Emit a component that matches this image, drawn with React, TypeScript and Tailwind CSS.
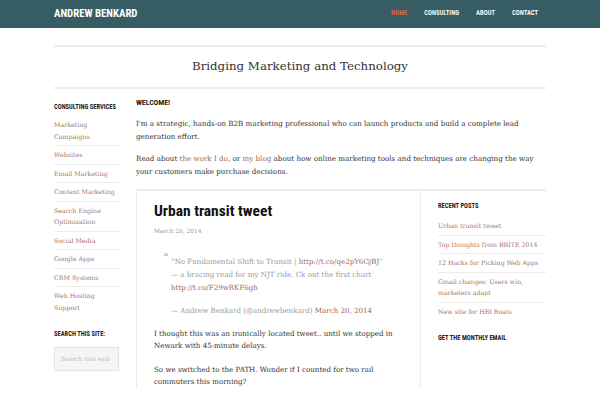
import React from "react";

const cond = "font-['Roboto_Condensed',Roboto,sans-serif] [font-stretch:75%]";
const serif = "font-['DejaVu_Serif','Liberation_Serif',serif]";

const services = [
  "Marketing Campaigns",
  "Websites",
  "Email Marketing",
  "Content Marketing",
  "Search Engine Optimization",
  "Social Media",
  "Google Apps",
  "CRM Systems",
  "Web Hosting Support",
];

const recent = [
  "Urban transit tweet",
  "Top thoughts from BRITE 2014",
  "12 Hacks for Picking Web Apps",
  "Gmail changes: Users win, marketers adapt",
  "New site for HBI Boats",
];

function WidgetTitle({ children, className = "" }: { children: React.ReactNode; className?: string }) {
  return (
    <h4 className={`${cond} whitespace-nowrap text-[6.5px] font-bold uppercase leading-[10px] text-[#222] ${className}`}>
      {children}
    </h4>
  );
}

function LinkList({ items }: { items: string[] }) {
  return (
    <ul>
      {items.map((item, i) => (
        <li
          key={item}
          className={`py-[3px] text-[6.3px] leading-[11.5px] text-[#a5766d] ${i < items.length - 1 ? "border-b border-[#ececec]" : ""}`}
        >
          {item}
        </li>
      ))}
    </ul>
  );
}

export default function App() {
  return (
    <div className={`min-h-[400px] bg-white ${serif} text-[#333]`}>
      <header className="h-[28px] bg-[#355d63]">
        <div className="mx-auto flex h-full w-[492px] items-center justify-between">
          <span className={`${cond} text-[10.8px] font-bold uppercase text-white`}>Andrew Benkard</span>
          <nav className={`${cond} flex pr-[8px] text-[6.6px] font-bold uppercase text-[#eef3f4]`}>
            <a className="text-[#dd6444]">Home</a>
            <a className="ml-[17px]">Consulting</a>
            <a className="ml-[17px]">About</a>
            <a className="ml-[17px]">Contact</a>
          </nav>
        </div>
      </header>

      <div className="mx-auto w-[492px]">
        <div className="mt-[17px] flex h-[44px] items-center justify-center border-y-2 border-[#ededed]">
          <h2 className="text-[11.8px] text-[#333]">Bridging Marketing and Technology</h2>
        </div>

        <div className="mt-[8px] flex">
          <aside className="w-[66px] pt-[4.7px]">
            <WidgetTitle className="mb-[4.5px]">Consulting Services</WidgetTitle>
            <LinkList items={services} />
            <WidgetTitle className="mt-[12.5px]">Search this site:</WidgetTitle>
            <div className="mt-[8.7px] h-[24px] w-[65px] border border-[#e3e3e3] bg-[#f5f5f5] pl-[6px] text-[6px] leading-[22px] text-[#bbb]">
              Search this web
            </div>
          </aside>

          <main className="ml-[16px] flex-1">
            <h3 className={`${cond} text-[7.8px] font-bold uppercase leading-[12px] text-[#222]`}>Welcome!</h3>
            <div className="mt-[7.5px] text-[7.15px] leading-[13px]">
              <p>
                I'm a strategic, hands-on B2B marketing professional who can launch products and build a complete lead
                generation effort.
              </p>
              <p className="mt-[9px]">
                Read about <a className="text-[#a0685a]">the work I do</a>, or <a className="text-[#a0685a]">my blog</a>{" "}
                about how online marketing tools and techniques are changing the way your customers make purchase decisions.
              </p>
            </div>

            <div className="mt-[11.5px] flex border-l border-t-2 border-[#ededed]">
              <article className="w-[283px] px-[17px] pt-[10px]">
                <h1 className={`${cond} text-[15.5px] font-bold leading-[20px] text-[#111]`}>Urban transit tweet</h1>
                <div className="mt-[6px] text-[5.9px] leading-[9px] text-[#999]">March 20, 2014</div>
                <blockquote className="relative ml-[17px] mt-[19px] text-[7.1px] leading-[13px] text-[#999]">
                  <span className="absolute left-[-8px] top-[-3px] text-[11px]">“</span>
                  <p>
                    “No Fundamental Shift to Transit | <a className="text-[#a0685a]">http://t.co/qe2pY6GjBJ</a>”
                    <br />— a bracing read for my NJT ride. Ck out the first chart{" "}
                    <a className="text-[#a0685a]">http://t.co/F29wRKF6gh</a>
                  </p>
                  <p className="mt-[10px]">
                    — Andrew Benkard (@andrewbenkard) <a className="text-[#a0685a]">March 20, 2014</a>
                  </p>
                </blockquote>
                <div className="mt-[10.5px] text-[7.1px] leading-[12.5px] text-[#333]">
                  <p>I thought this was an ironically located tweet.. until we stopped in Newark with 45-minute delays.</p>
                  <p className="mt-[11px]">So we switched to the PATH. Wonder if I counted for two rail commuters this morning?</p>
                </div>
              </article>
              <aside className="flex-1 self-stretch border-l border-[#ededed] pl-[17px] pt-[10px]">
                <WidgetTitle className="mb-[6.25px] text-[6.4px]">Recent Posts</WidgetTitle>
                <LinkList items={recent} />
                <WidgetTitle className="mt-[12.75px] text-[6.4px]">Get the monthly email</WidgetTitle>
              </aside>
            </div>
          </main>
        </div>
      </div>
    </div>
  );
}
